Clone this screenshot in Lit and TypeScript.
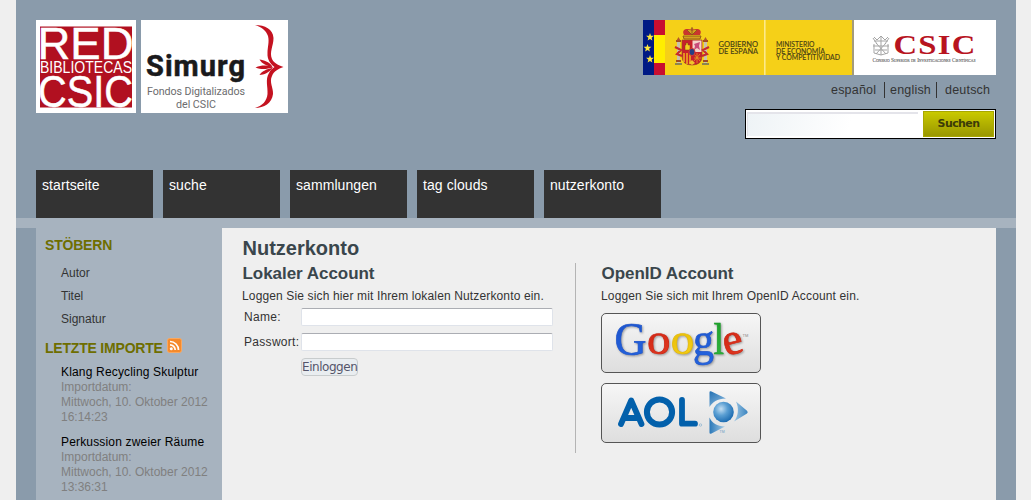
import { LitElement, html, css, svg } from "lit";
import { customElement } from "lit/decorators.js";

@customElement("site-logos")
class SiteLogos extends LitElement {
  static styles = css`
    :host { display: flex; gap: 5px; }
    svg { display: block; overflow: visible; }
    .sans { font-family: "Liberation Sans", Arial, sans-serif; }
    .din { font-family: Roboto, "Open Sans", sans-serif; }
  `;
  render() {
    return html`
      <svg width="100" height="93" viewBox="0 0 100 93">
        <rect width="100" height="93" fill="#fff" />
        <rect x="4" y="6.5" width="92" height="81" fill="#b11020" />
        <g class="sans" fill="#fff" stroke="#fff">
          <text x="1.500" y="38.6" font-size="44.500" stroke-width=".5" textLength="96" lengthAdjust="spacingAndGlyphs">RED</text>
          <text x="4" y="53" font-size="16" stroke-width="0" textLength="92" lengthAdjust="spacingAndGlyphs">BIBLIOTECAS</text>
          <text x="2" y="87" font-size="44.500" stroke-width=".5" textLength="95" lengthAdjust="spacingAndGlyphs">CSIC</text>
        </g>
      </svg>
      <svg width="147" height="93" viewBox="0 0 147 93">
        <rect width="147" height="93" fill="#fff" />
        <text class="din" x="5" y="56" font-size="29" font-weight="700" fill="#1a1a1c" stroke="#1a1a1c" stroke-width=".5" textLength="99" lengthAdjust="spacing">Simurg</text>
        <text class="din" x="6" y="75" font-size="10.700" fill="#6c6c6e" textLength="98" lengthAdjust="spacing">Fondos Digitalizados</text>
        <text class="din" x="35" y="88" font-size="10.700" fill="#6c6c6e" textLength="40" lengthAdjust="spacing">del CSIC</text>
        <g fill="#c41220">
          <path d="M114 5C124 5 132 9 132.500 18C132.500 26 128 32 131 39C133 43 137 45 142.500 47C137 49 133 51 131 56C128 62 132.500 68 132 74C131 83 123 88 114 88C121 86 126 81 126.500 74C127 66 124 60 128 53C129.500 50 131 48.500 133.500 47C130 44.500 126 40 126.500 33C126.500 27 128.500 22 127 16C125 10 120 7 114 5Z" />
          <path d="M132 47C125 45 121 45 114.500 47.500C121 50 126 49 132 47.500Z" />
          <path d="M131 46C128 42 123 40 118.500 39.500C121 44 126 46 131 47Z" />
          <path d="M131 48C126 49 121 51 118.500 55C123 55 128 52 131 49Z" />
        </g>
      </svg>
    `;
  }
}

@customElement("gov-banner")
class GovBanner extends LitElement {
  static styles = css`
    :host { display: block; }
    svg { display: block; }
    .gill { font-family: Lato, "Open Sans", sans-serif; }
    .serif { font-family: "Liberation Serif", "Times New Roman", serif; }
    .caps { font-variant: small-caps; }
    .wide { letter-spacing: 1px; }
  `;
  star(y: number, x: number) {
    return svg`<path transform="translate(${x} ${y})" fill="#ffe83c" d="M0-4L1-1.2H3.9L1.6.7L2.4 3.6L0 1.9L-2.4 3.6L-1.6.7L-3.9-1.2H-1Z"/>`;
  }
  render() {
    return html`
      <svg width="353" height="55" viewBox="0 0 353 55">
        <rect width="209" height="55" fill="#f5d018" />
        <rect width="11" height="55" fill="#001a84" />
        <rect x="11" width="11" height="55" fill="#ffee00" />
        <rect x="11" width="11" height="15" fill="#c80e30" />
        <rect x="11" y="43" width="11" height="12" fill="#c80e30" />
        ${this.star(17, 7)}${this.star(28, 4.5)}${this.star(39, 7)}
        <rect x="121" width="1.6" height="55" fill="#fce98a" />
        <g>
          <path d="M41 15C38 9 44 8 49 10C54 8 60 9 57 15Z" fill="#c9362d" />
          <path d="M40 16H58L57 19H41ZM44 10L49 15L54 10M49 7V15" fill="#d6a020" stroke="#8d5518" stroke-width=".9" />
          <circle cx="49" cy="9.5" r="1.5" fill="#a85a22" />
          <path d="M39 20H59V36Q59 45 49 45Q39 45 39 36Z" fill="#c8202b" stroke="#9a481f" stroke-width=".7" />
          <path d="M49.5 20.5H58.5V32H49.5Z" fill="#f4d3cb" />
          <path d="M51 30L52 26L51 24L54 23L57 22L56 26L57 30L54 28Z" fill="#c94b7a" />
          <path d="M42 30V25H43V23H45V25H47V30Z" fill="#f4cc23" stroke="#7b4915" stroke-width=".5" />
          <path d="M41 33V42M44 33V44M47 33V44" stroke="#f2c01f" stroke-width="1.4" />
          <path d="M51 34L57 41M57 34L51 41M54 33V43M51 38H58" stroke="#e8a721" stroke-width=".7" />
          <ellipse cx="49" cy="32" rx="3" ry="3.6" fill="#263f86" stroke="#d53a32" />
          <path d="M46 43L49 40L52 43L49 45Z" fill="#efc62b" />
          <path d="M35.5 21V43M62.500 21V43" stroke="#c9c2ab" stroke-width="3" />
          <path d="M33 21H38M60 21H65M33 41H38M60 41H65" stroke="#a14b22" stroke-width="1.8" />
          <path d="M32 44H39M59 44H66" stroke="#6b6c60" stroke-width="1.600" />
          <path d="M32 27L38 30L34 34L39 36M66 27L60 30L64 34L59 36" fill="none" stroke="#c62b2d" stroke-width="2.2" />
          <path d="M33.500 20.500L35.500 17L37.500 20.500ZM60.500 20.500L62.500 17L64.500 20.500Z" fill="#b45727" />
        </g>
        <g class="gill" font-size="7.200" font-weight="500" fill="#4a4216" stroke="#4a4216" stroke-width=".1">
          <text x="75.5" y="27" textLength="39.500" lengthAdjust="spacingAndGlyphs">GOBIERNO</text>
          <text x="75.5" y="34" textLength="39.500" lengthAdjust="spacingAndGlyphs">DE ESPAÑA</text>
          <text x="133" y="27" textLength="38.500" lengthAdjust="spacingAndGlyphs">MINISTERIO</text>
          <text x="133" y="33.5" textLength="49" lengthAdjust="spacingAndGlyphs">DE ECONOMÍA</text>
          <text x="133" y="40" textLength="64" lengthAdjust="spacingAndGlyphs">Y COMPETITIVIDAD</text>
        </g>
        <rect x="209" width="2" height="55" fill="#a39b7c" />
        <rect x="211" width="142" height="55" fill="#fff" />
        <g fill="none" stroke="#a5a5a5" stroke-width="1">
          <path d="M231 17L234 20L238 16L242 20L245 17M231 21H245M233 23L243 34M243 23L233 34M230 26H246M232 30H244M238 17V35M231 24V33L238 35L245 33V24M230 18L234 24M246 18L242 24" />
        </g>
        <text class="serif wide" x="250.500" y="34" font-size="27" font-weight="700" fill="#b8141f" textLength="83" lengthAdjust="spacingAndGlyphs">CSIC</text>
        <text class="serif caps" x="229.500" y="41.500" font-size="5.600" fill="#555" stroke="#555" stroke-width=".1" textLength="103" lengthAdjust="spacingAndGlyphs">Consejo Superior de Investigaciones Científicas</text>
      </svg>
    `;
  }
}

@customElement("openid-buttons")
class OpenidButtons extends LitElement {
  static styles = css`
    :host { display: flex; flex-direction: column; gap: 10px; }
    button {
      display: block; box-sizing: border-box; width: 160px; height: 60px; padding: 0;
      border: 1px solid #555; border-radius: 5px;
      background: linear-gradient(#f6f6f6, #dedede);
    }
    svg { display: block; overflow: visible; }
    .google { font-family: "Liberation Serif", serif; filter: drop-shadow(1px 1.5px 1px rgba(0, 0, 0, 0.35)); }
    .tm { font-family: "Liberation Sans", sans-serif; }
  `;
  render() {
    const grad = (id: string, a: string, b: string) => svg`
      <linearGradient id=${id} x1="0" y1="0" x2="0.3" y2="1"><stop offset="0" stop-color=${a} /><stop offset="1" stop-color=${b} /></linearGradient>`;
    return html`
      <button aria-label="Google">
        <svg width="158" height="58" viewBox="0 0 158 58">
          <defs>
            ${grad("b", "#1b50c8", "#2464de")}${grad("r", "#c61c0c", "#e23a22")}
            ${grad("y", "#e2b500", "#f5cf18")}${grad("g", "#189a26", "#31b53d")}
          </defs>
          <g class="google" font-size="44.500" stroke-width=".7">
            <text x="12.500" y="40.500" font-size="46.500" fill="url(#b)" stroke="#1f55cc" textLength="32" lengthAdjust="spacingAndGlyphs">G</text>
            <text x="45" y="40" fill="url(#r)" stroke="#cf2513" textLength="23.500" lengthAdjust="spacingAndGlyphs">o</text>
            <text x="68.700" y="40" fill="url(#y)" stroke="#e5ba05" textLength="23.500" lengthAdjust="spacingAndGlyphs">o</text>
            <text x="91" y="41" font-size="47" fill="url(#b)" stroke="#1f55cc" textLength="21" lengthAdjust="spacingAndGlyphs">g</text>
            <text x="111.500" y="39.500" fill="url(#g)" stroke="#1c9f2b" textLength="10.500" lengthAdjust="spacingAndGlyphs">l</text>
            <text transform="rotate(-14 131 30)" x="121" y="40" fill="url(#r)" stroke="#cf2513" textLength="20" lengthAdjust="spacingAndGlyphs">e</text>
          </g>
          <text class="tm" x="140.500" y="23" font-size="4" fill="#888">TM</text>
        </svg>
      </button>
      <button aria-label="AOL">
        <svg width="158" height="58" viewBox="0 0 158 58">
          <defs>
            <radialGradient id="ball" cx=".38" cy=".35" r=".7"><stop offset="0" stop-color="#c3def2" /><stop offset=".45" stop-color="#5b9fd3" /><stop offset="1" stop-color="#1767ae" /></radialGradient>
            <linearGradient id="t1" x1="0" y1="0" x2=".8" y2="1"><stop offset="0" stop-color="#2270b3" /><stop offset="1" stop-color="#8dbce0" /></linearGradient>
            <linearGradient id="t2"><stop offset="0" stop-color="#9cc6e4" /><stop offset="1" stop-color="#3a84c0" /></linearGradient>
            <linearGradient id="t3" x1="0" y1="0" x2="1" y2="0"><stop offset="0" stop-color="#2b78b8" /><stop offset="1" stop-color="#a5cbe6" /></linearGradient>
          </defs>
          <g fill="none" stroke="#0260ab" stroke-width="5.800" stroke-linecap="round" stroke-linejoin="round">
            <path d="M19 40L29.200 16.500L39.500 40M24.500 34H34" />
            <circle cx="57.500" cy="28" r="12.600" stroke-width="6" />
            <path d="M80 16V39.700H93" />
          </g>
          <circle cx="98.500" cy="41" r="1.200" fill="none" stroke="#8ab2d0" stroke-width=".7" />
          <path d="M107.500 8.500Q107.500 6.500 109.500 7.500L124 14.500C115 15 110.500 18 107.500 23Z" fill="url(#t1)" />
          <path d="M134 17.500L145 26.700Q146.500 28.200 145 29.500L132 37.500C136.500 32 137 24 134 17.500Z" fill="url(#t2)" />
          <path d="M107.500 33.500C110 39 115 42 123 42.500L109.500 49.500Q107.500 50.300 107.500 48.500Z" fill="url(#t3)" />
          <circle cx="121.500" cy="28" r="10.300" fill="url(#ball)" />
          <text class="tm" x="117.500" y="49" font-size="3.500" fill="#6c9cc2">TM</text>
        </svg>
      </button>
    `;
  }
}

@customElement("app-root")
class AppRoot extends LitElement {
  static styles = css`
    :host {
      display: block; width: 1031px; height: 500px; overflow: hidden; background: #efefef;
      font: 12px/15px "Liberation Sans", Arial, sans-serif; color: #333;
    }
    * { box-sizing: border-box; margin: 0; }
    .page { width: 1000px; height: 500px; margin-left: 16px; background: #8a9bab; display: flex; flex-direction: column; }
    header { height: 170px; padding: 20px 20px 0; display: flex; justify-content: space-between; align-items: flex-start; }
    .right { display: flex; flex-direction: column; align-items: flex-end; }
    .langs { display: flex; margin: 7px 5px 0 0; height: 16px; font-size: 12.5px; line-height: 16px; letter-spacing: 0.2px; }
    .langs span + span { border-left: 1px solid #333; }
    .es { width: 53px; }
    .en { width: 52px; padding-left: 5px; }
    .de { width: 55px; padding-left: 8px; }
    .search { margin-top: 11px; width: 251px; height: 30px; border: 1px solid #000; background: #fff; padding: 1px; display: flex; justify-content: space-between; }
    .query { width: 171px; height: 24px; margin-top: 1px; border: 0; border-top: 2px solid #e4e4ea; border-left: 1px solid #e2e2e8; background: linear-gradient(100deg, #eef3f6, #fff 60%); padding: 0; }
    .go { width: 71px; height: 26px; border: 1px solid #a9a800; background: linear-gradient(#c9c900, #999700); color: #3c3b08; font: bold 11px/20px "DejaVu Sans", Verdana, sans-serif; letter-spacing: -0.6px; padding: 0; }
    nav { display: flex; gap: 10px; padding-left: 20px; height: 48px; }
    .tab { width: 117px; background: #333; color: #fff; font-size: 14px; line-height: 16px; padding: 7px 6px; letter-spacing: 0.08px; }
    .bar { height: 10px; background: #a7b3bf; }
    .body { flex: 1; display: flex; padding: 0 20px; min-height: 0; }
    aside { width: 186px; background: #a7b3bf; padding: 9px 0 0 9px; }
    h3 { color: #6e6e00; font-size: 14px; line-height: 16px; white-space: nowrap; display: flex; letter-spacing: -0.2px; }
    .links { padding: 9px 0 0 16px; line-height: 23px; }
    .rss { margin: -2px 0 0 4px; }
    .imports { padding-left: 16px; }
    .import { height: 60px; margin-bottom: 10px; color: #808080; }
    .import b { display: block; font-weight: normal; color: #000; letter-spacing: 0.17px; }
    .imports-title { margin-top: 9px; margin-bottom: 9px; }
    main { width: 774px; background: #efefef; padding: 8px 0 0 20px; }
    h1 { font-size: 20px; line-height: 24px; color: #3a464c; padding-left: 0.5px; }
    h2 { font-size: 17px; line-height: 20px; color: #3a464c; letter-spacing: -0.04px; }
    .cols { display: flex; margin-top: 3px; }
    .local { width: 334px; height: 190px; border-right: 1px solid #b4b4b4; padding-top: 1px; }
    .local h2 { padding-left: 0.5px; }
    .openid { padding: 1px 0 0 25px; }
    .openid h2 { padding-left: 0.5px; }
    .hint { margin-top: 5px; white-space: nowrap; letter-spacing: 0.14px; }
    .form { display: grid; grid-template-columns: 57px 252px; row-gap: 7px; padding-left: 2px; margin-top: 4px; }
    .form label { line-height: 18px; letter-spacing: 0.3px; white-space: nowrap; }
    .field { height: 18px; width: 252px; border: 1px solid #dfe3ea; border-top-color: #abadb3; border-radius: 2px; background: #fff; padding: 0; }
    .login { grid-column: 2; justify-self: start; width: 57px; height: 18px; margin-top: 0; padding: 0; border: 1px solid #c8cccd; border-radius: 4px; background: #e9edf0; color: #55556a; font: 12px/14px "DejaVu Sans", Verdana, sans-serif; white-space: nowrap; letter-spacing: -0.45px; }
    openid-buttons { margin-top: 9px; }
  `;
  tabs = ["startseite", "suche", "sammlungen", "tag clouds", "nutzerkonto"];
  imports = [
    { title: "Klang Recycling Skulptur", time: "16:14:23" },
    { title: "Perkussion zweier Räume", time: "13:36:31" },
  ];
  render() {
    return html`
      <div class="page">
        <header>
          <site-logos></site-logos>
          <div class="right">
            <gov-banner></gov-banner>
            <div class="langs"><span class="es">español</span><span class="en">english</span><span class="de">deutsch</span></div>
            <div class="search"><input class="query" aria-label="Suche" /><button class="go">Suchen</button></div>
          </div>
        </header>
        <nav>${this.tabs.map((t) => html`<a class="tab">${t}</a>`)}</nav>
        <div class="bar"></div>
        <div class="body">
          <aside>
            <h3>STÖBERN</h3>
            <div class="links"><div>Autor</div><div>Titel</div><div>Signatur</div></div>
            <h3 class="imports-title">LETZTE IMPORTE
              <svg class="rss" width="15" height="15" viewBox="0 0 15 15">
                <rect x=".5" y=".5" width="14" height="14" rx="2" fill="#f58a2c" stroke="#f9a860" />
                <circle cx="4.300" cy="10.800" r="1.500" fill="#fff" />
                <path d="M3 6.800A5.200 5.200 0 0 1 8.200 12M3 3.500A8.500 8.500 0 0 1 11.500 12" fill="none" stroke="#fff" stroke-width="1.700" />
              </svg>
            </h3>
            <div class="imports">
              ${this.imports.map((i) => html`<div class="import"><b>${i.title}</b>Importdatum:<br />Mittwoch, 10. Oktober 2012<br />${i.time}</div>`)}
            </div>
          </aside>
          <main>
            <h1>Nutzerkonto</h1>
            <div class="cols">
              <section class="local">
                <h2>Lokaler Account</h2>
                <p class="hint">Loggen Sie sich hier mit Ihrem lokalen Nutzerkonto ein.</p>
                <div class="form">
                  <label>Name:</label><input class="field" aria-label="Name" />
                  <label>Passwort:</label><input class="field" type="password" aria-label="Passwort" />
                  <button class="login">Einloggen</button>
                </div>
              </section>
              <section class="openid">
                <h2>OpenID Account</h2>
                <p class="hint">Loggen Sie sich mit Ihrem OpenID Account ein.</p>
                <openid-buttons></openid-buttons>
              </section>
            </div>
          </main>
        </div>
      </div>
    `;
  }
}
